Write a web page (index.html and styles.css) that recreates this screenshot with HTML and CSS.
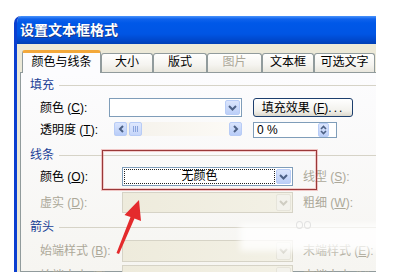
FILE: index.html
```html
<!DOCTYPE html>
<html lang="zh-CN">
<head>
  <meta charset="UTF-8" />
  <title>设置文本框格式</title>
  <link rel="stylesheet" href="styles.css">
</head>
<body>

  <!-- Dialog -->
  <div class="dialog">
    <div class="titlebar">设置文本框格式</div>

    <div class="tabs">
      <div class="tab active" style="width:79px">颜色与线条</div>
      <div class="tab" style="width:52px">大小</div>
      <div class="tab" style="width:54px">版式</div>
      <div class="tab disabled" style="width:55px">图片</div>
      <div class="tab" style="width:52px">文本框</div>
      <div class="tab" style="width:61px">可选文字</div>
    </div>

    <div class="panel">
      <div class="group"><span>填充</span></div>

      <div class="row r1">
        <span class="lbl" style="width:69px">颜色 (<u>C</u>):</span>
        <div class="combo" style="width:133px">
          <span class="value"></span>
          <span class="drop"><svg width="9" height="6" viewBox="0 0 9 6"><path d="M1 1 L4.5 4.5 L8 1" fill="none" stroke="#4d6185" stroke-width="2"/></svg></span>
        </div>
        <button class="btn">填充效果 (<u>F</u>)<span class="dots">...</span></button>
      </div>

      <div class="row r2">
        <span class="lbl" style="width:74px">透明度 (<u>T</u>):</span>
        <div class="slider">
          <span class="sbtn"><svg width="6" height="8" viewBox="0 0 6 8"><path d="M5 1 L2 4 L5 7" fill="none" stroke="#4d6185" stroke-width="2"/></svg></span>
          <span class="thumb"><i></i><i></i><i></i></span>
          <span class="track"></span>
          <span class="sbtn"><svg width="6" height="8" viewBox="0 0 6 8"><path d="M1 1 L4 4 L1 7" fill="none" stroke="#4d6185" stroke-width="2"/></svg></span>
        </div>
        <div class="spin">
          <span class="value">0 %</span>
          <span class="spinbtn"><svg width="7" height="10" viewBox="0 0 7 10"><path d="M1 4 L3.5 1.5 L6 4 M1 6 L3.5 8.5 L6 6" fill="none" stroke="#4d6185" stroke-width="1.6"/></svg></span>
        </div>
      </div>

      <div class="group g2"><span>线条</span></div>

      <div class="row r3">
        <span class="lbl" style="width:82px">颜色 (<u>O</u>):</span>
        <div class="combo" style="width:171px">
          <span class="value focus">无颜色</span>
          <span class="drop"><svg width="9" height="6" viewBox="0 0 9 6"><path d="M1 1 L4.5 4.5 L8 1" fill="none" stroke="#4d6185" stroke-width="2"/></svg></span>
        </div>
        <span class="lbl off">线型 (<u>S</u>):</span>
      </div>

      <div class="row r4">
        <span class="lbl off" style="width:82px">虚实 (<u>D</u>):</span>
        <div class="combo dis" style="width:171px">
          <span class="value"></span>
          <span class="drop"><svg width="9" height="6" viewBox="0 0 9 6"><path d="M1 1 L4.5 4.5 L8 1" fill="none" stroke="#cfcdc2" stroke-width="2"/></svg></span>
        </div>
        <span class="lbl off">粗细 (<u>W</u>):</span>
      </div>

      <div class="group g3"><span>箭头</span></div>

      <div class="row r5">
        <span class="lbl off" style="width:82px">始端样式 (<u>B</u>):</span>
        <div class="combo dis" style="width:171px">
          <span class="value"></span>
          <span class="drop"><svg width="9" height="6" viewBox="0 0 9 6"><path d="M1 1 L4.5 4.5 L8 1" fill="none" stroke="#cfcdc2" stroke-width="2"/></svg></span>
        </div>
        <span class="lbl off">末端样式 (<u>E</u>):</span>
      </div>

      <div class="row r6">
        <span class="lbl off" style="width:82px">始端大小 (<u>Z</u>):</span>
        <div class="combo dis" style="width:171px">
          <span class="value"></span>
          <span class="drop"></span>
        </div>
        <span class="lbl off">末端大小 (<u>N</u>):</span>
      </div>
    </div>
  </div>

  <!-- annotation overlays -->
  <div class="mark"></div>
  <div class="smudge"></div>
  <span class="rings"><i></i><i></i></span>
  <svg class="arrow" width="397" height="272" viewBox="0 0 397 272">
    <path d="M139 200 L141 221 L134.5 218.5 L119 254 L116.5 253 L130.5 217 L124.5 215 Z" fill="#e42a2c"/>
  </svg>

</body>
</html>
```

FILE: styles.css
```css
* {
  box-sizing: border-box;
}

body {
  margin: 0;
  height: 272px;
  overflow: hidden;
  position: relative;
  background: #fff;
  font-family: "Liberation Sans", "Noto Sans CJK SC", sans-serif;
  font-size: 12px;
  line-height: 14px;
  color: #000;
}

.dialog {
  margin: 16px 0 0 14px;
  width: 362px;
  height: 256px;
  background: #ece9d8;
  border-left: 3px solid #0b3fd0;
  border-radius: 7px 0 0 0;
  overflow: hidden;
}

.titlebar {
  height: 28px;
  padding-left: 3px;
  background: linear-gradient(#4a94fb 0, #0f62ec 3px, #0058e8 7px, #0055e4 18px, #0048cc 24px, #003fb4 28px);
  color: #fff;
  font-size: 14px;
  font-weight: bold;
  line-height: 28px;
  text-shadow: 1px 1px 0 #1a3a88;
}

.tabs {
  display: flex;
  align-items: flex-end;
  height: 28px;
  padding-left: 5px;
}

.tab {
  height: 19px;
  border: 1px solid #919b9c;
  border-bottom: none;
  border-radius: 3px 3px 0 0;
  background: linear-gradient(#fffffe, #f5f4f0 60%, #e9e7de);
  text-align: center;
  line-height: 17px;
}

.tab.active {
  height: 23px;
  margin-bottom: -1px;
  position: relative;
  z-index: 1;
  border-top: 3px solid #f3a83a;
  background: #fcfcfe;
  line-height: 19px;
}

.tab.disabled {
  color: #aca899;
}

.panel {
  margin-left: 3px;
  height: 200px;
  padding-top: 5px;
  border: 1px solid #919b9c;
  border-right: none;
  background: linear-gradient(#fcfcfe, #f6f5f1);
}

.group {
  display: flex;
  align-items: center;
  height: 14px;
  padding-left: 9px;
  color: #1b3f96;
}

.group::after {
  content: "";
  flex: 1;
  margin-left: 5px;
  border-top: 1px solid #d6d3c7;
}

.g2 {
  margin-top: 10px;
}

.g3 {
  margin-top: 7px;
}

.row {
  display: flex;
  align-items: center;
  padding-left: 19px;
}

.r1 { margin-top: 6px; height: 19px; }
.r2 { margin-top: 5px; height: 16px; }
.r3 { margin-top: 5px; height: 19px; }
.r4 { margin-top: 6px; height: 21px; }
.r5 { margin-top: 6px; height: 22px; }
.r6 { margin-top: 3px; height: 22px; }

.lbl {
  flex: none;
  white-space: nowrap;
}

.lbl.off {
  color: #aca899;
}

.combo {
  flex: none;
  display: flex;
  height: 100%;
  padding: 1px;
  border: 1px solid #7f9db9;
  background: #fff;
  margin-right: 10px;
}

.r1 .combo {
  margin-right: 11px;
}

.combo .value {
  flex: 1;
}

.combo .focus {
  margin-right: 1px;
  border: 1px dotted #222;
  text-align: center;
  line-height: 13px;
}

.drop {
  width: 15px;
  display: flex;
  align-items: center;
  justify-content: center;
  border: 1px solid #b9cdf7;
  border-radius: 2px;
  background: linear-gradient(#dbe5fc, #bccff8);
}

.combo.dis {
  border-color: #d6d3c6;
  background: linear-gradient(90deg, #eeebdc, #f3f1e6);
}

.combo.dis .drop {
  border-color: #e6e4da;
  background: #f3f2ec;
}

.btn {
  width: 100px;
  height: 19px;
  padding: 0;
  border: 1px solid #1d3f6e;
  border-radius: 3px;
  background: linear-gradient(#ffffff, #f2f1ec 70%, #dcd8cc);
  font: inherit;
  color: #000;
}

.dots {
  letter-spacing: 2px;
}

.slider {
  flex: none;
  display: flex;
  width: 128px;
  height: 14px;
  margin-right: 11px;
  align-self: flex-start;
  background: linear-gradient(90deg, #f4f1ea, #fdfbf7);
}

.sbtn,
.thumb {
  width: 13px;
  height: 14px;
  display: flex;
  align-items: center;
  justify-content: center;
  border: 1px solid #b8ccf6;
  border-radius: 2px;
  background: linear-gradient(#d9e4fd, #b9cdf8);
}

.thumb {
  margin-left: 2px;
  gap: 1px;
  background: linear-gradient(#dfe8fd, #c6d6fa);
}

.thumb i {
  width: 1px;
  height: 6px;
  background: #8aa3dc;
}

.track {
  flex: 1;
}

.spin {
  flex: none;
  display: flex;
  align-items: center;
  width: 84px;
  height: 16px;
  padding-left: 3px;
  border: 1px solid #7f9db9;
  background: #fff;
}

.spin .value {
  flex: 1;
}

.spinbtn {
  width: 11px;
  height: 14px;
  margin-right: 7px;
  display: flex;
  align-items: center;
  justify-content: center;
  border: 1px solid #b9cdf7;
  border-radius: 2px;
  background: linear-gradient(#dbe5fc, #bccff8);
}

/* red box drawn over the screenshot */
.mark {
  position: absolute;
  left: 102px;
  top: 150px;
  width: 215px;
  height: 40px;
  border: 1px solid #9a3838;
  box-shadow: 0 0 0 1px rgba(225, 120, 120, 0.4), inset 0 0 0 1px rgba(225, 120, 120, 0.35);
}

.smudge {
  position: absolute;
  left: 240px;
  top: 224px;
  width: 145px;
  height: 27px;
  background: rgba(255, 255, 255, 0.8);
  filter: blur(3px);
}

.rings {
  position: absolute;
  left: 296px;
  top: 221px;
  display: flex;
  gap: 1px;
}

.rings i {
  width: 7px;
  height: 8px;
  border: 1px solid #e2e2e2;
  border-radius: 50%;
}

.arrow {
  position: absolute;
  left: 0;
  top: 0;
  pointer-events: none;
}
```
